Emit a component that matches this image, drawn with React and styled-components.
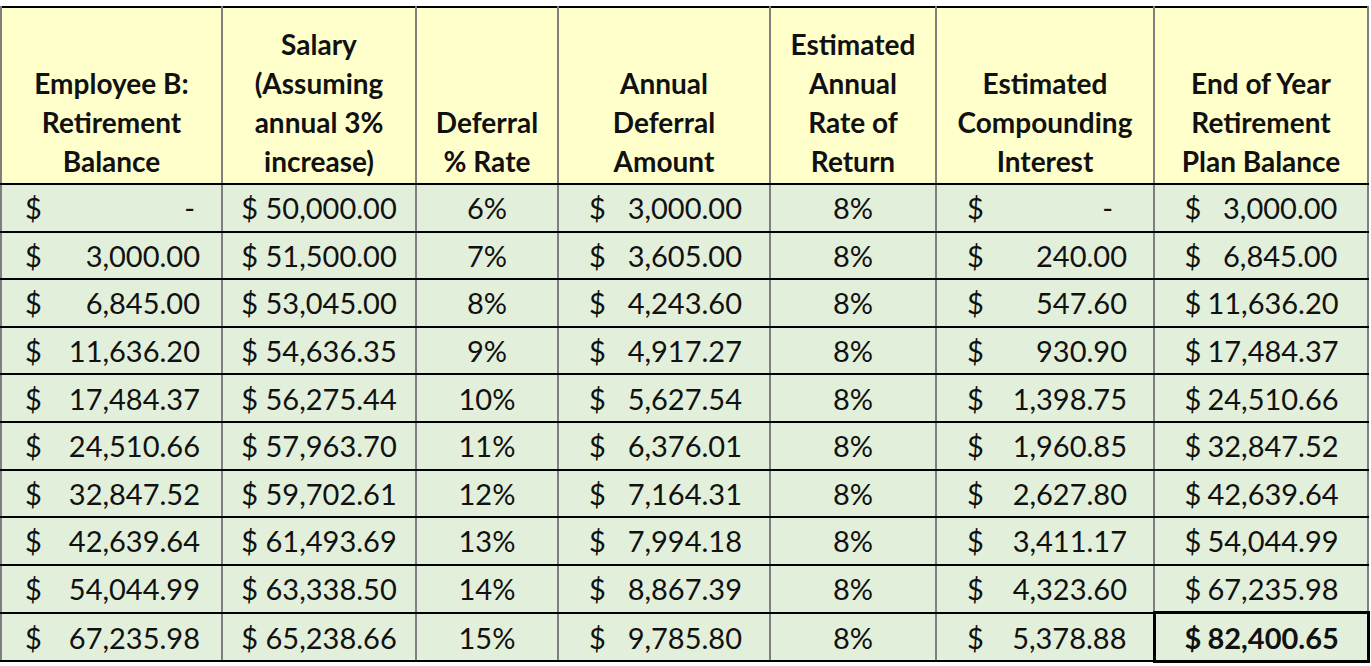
import React from 'react'
import styled, { createGlobalStyle } from 'styled-components'

const GlobalStyle = createGlobalStyle`
  html, body {
    margin: 0;
    padding: 0;
    background: #ffffff;
  }
  body {
    font-family: Lato, "Liberation Sans", Arial, sans-serif;
    color: #111;
  }
`

const Sheet = styled.div`
  padding-top: 6px;
  width: 1371px;
  overflow: hidden;
`

const Table = styled.table`
  border-collapse: collapse;
  table-layout: fixed;
  width: 1367px;
  border-top: 2px solid #000;
  border-right: 2px solid #000;
`

const HeadCell = styled.th`
  background: #ffffcc;
  font-weight: 700;
  font-size: 28px;
  line-height: 39px;
  text-align: center;
  vertical-align: bottom;
  padding: 0 4px 2px;
  height: 173px;
  border-left: 2px solid #7f7f7f;
  border-right: 2px solid #7f7f7f;
  border-bottom: 2px solid #000;
`

const Cell = styled.td`
  background: #e2efda;
  font-size: 29px;
  height: 45.6px;
  padding: 0;
  vertical-align: middle;
  text-align: center;
  white-space: nowrap;
  font-variant-numeric: tabular-nums;
  border-left: 2px solid #7f7f7f;
  border-right: 2px solid #7f7f7f;
  border-top: 2px solid #000;
  border-bottom: 2px solid #000;
  ${p => p.$total && `
    border: 3px solid #000;
    font-weight: 700;
  `}
`

const Accounting = styled.div`
  display: flex;
  justify-content: space-between;
  align-items: center;
  padding: 0 ${p => p.$right}px 0 ${p => p.$left}px;
`

const Dash = styled.span`
  margin-right: ${p => p.$shift}px;
`

const Fixed = styled.span`
  display: inline-grid;
  grid-template-columns: auto 130px;
  column-gap: 6px;
  align-items: center;
  & > span:last-child {
    text-align: right;
  }
`

const money = n =>
  n.toLocaleString('en-US', { minimumFractionDigits: 2, maximumFractionDigits: 2 })

const rows = [
  [0, 50000.0, 6, 3000.0, 0, 3000.0],
  [3000.0, 51500.0, 7, 3605.0, 240.0, 6845.0],
  [6845.0, 53045.0, 8, 4243.6, 547.6, 11636.2],
  [11636.2, 54636.35, 9, 4917.27, 930.9, 17484.37],
  [17484.37, 56275.44, 10, 5627.54, 1398.75, 24510.66],
  [24510.66, 57963.7, 11, 6376.01, 1960.85, 32847.52],
  [32847.52, 59702.61, 12, 7164.31, 2627.8, 42639.64],
  [42639.64, 61493.69, 13, 7994.18, 3411.17, 54044.99],
  [54044.99, 63338.5, 14, 8867.39, 4323.6, 67235.98],
  [67235.98, 65238.66, 15, 9785.8, 5378.88, 82400.65],
]

const widths = [221, 194, 142, 212, 166, 218, 214]

function AcctCell({ value, left, right, dashShift }) {
  return (
    <Cell>
      <Accounting $left={left} $right={right}>
        <span>$</span>
        {value === 0 ? <Dash $shift={dashShift}>-</Dash> : <span>{money(value)}</span>}
      </Accounting>
    </Cell>
  )
}

export default function App() {
  return (
    <Sheet>
      <GlobalStyle />
      <Table>
        <colgroup>
          {widths.map((w, i) => <col key={i} style={{ width: w }} />)}
        </colgroup>
        <thead>
          <tr>
            <HeadCell>Employee B:<br />Retirement<br />Balance</HeadCell>
            <HeadCell>Salary<br />(Assuming<br />annual 3%<br />increase)</HeadCell>
            <HeadCell>Deferral<br />% Rate</HeadCell>
            <HeadCell>Annual<br />Deferral<br />Amount</HeadCell>
            <HeadCell>Estimated<br />Annual<br />Rate of<br />Return</HeadCell>
            <HeadCell>Estimated<br />Compounding<br />Interest</HeadCell>
            <HeadCell>End of Year<br />Retirement<br />Plan Balance</HeadCell>
          </tr>
        </thead>
        <tbody>
          {rows.map((r, i) => (
            <tr key={i}>
              <AcctCell value={r[0]} left={23} right={21} dashShift={5} />
              <Cell>$ {money(r[1])}</Cell>
              <Cell>{r[2]}%</Cell>
              <AcctCell value={r[3]} left={30} right={27} dashShift={5} />
              <Cell>8%</Cell>
              <AcctCell value={r[4]} left={30} right={26} dashShift={14} />
              <Cell $total={i === rows.length - 1}>
                <Fixed>
                  <span>$</span>
                  <span>{money(r[5])}</span>
                </Fixed>
              </Cell>
            </tr>
          ))}
        </tbody>
      </Table>
    </Sheet>
  )
}
